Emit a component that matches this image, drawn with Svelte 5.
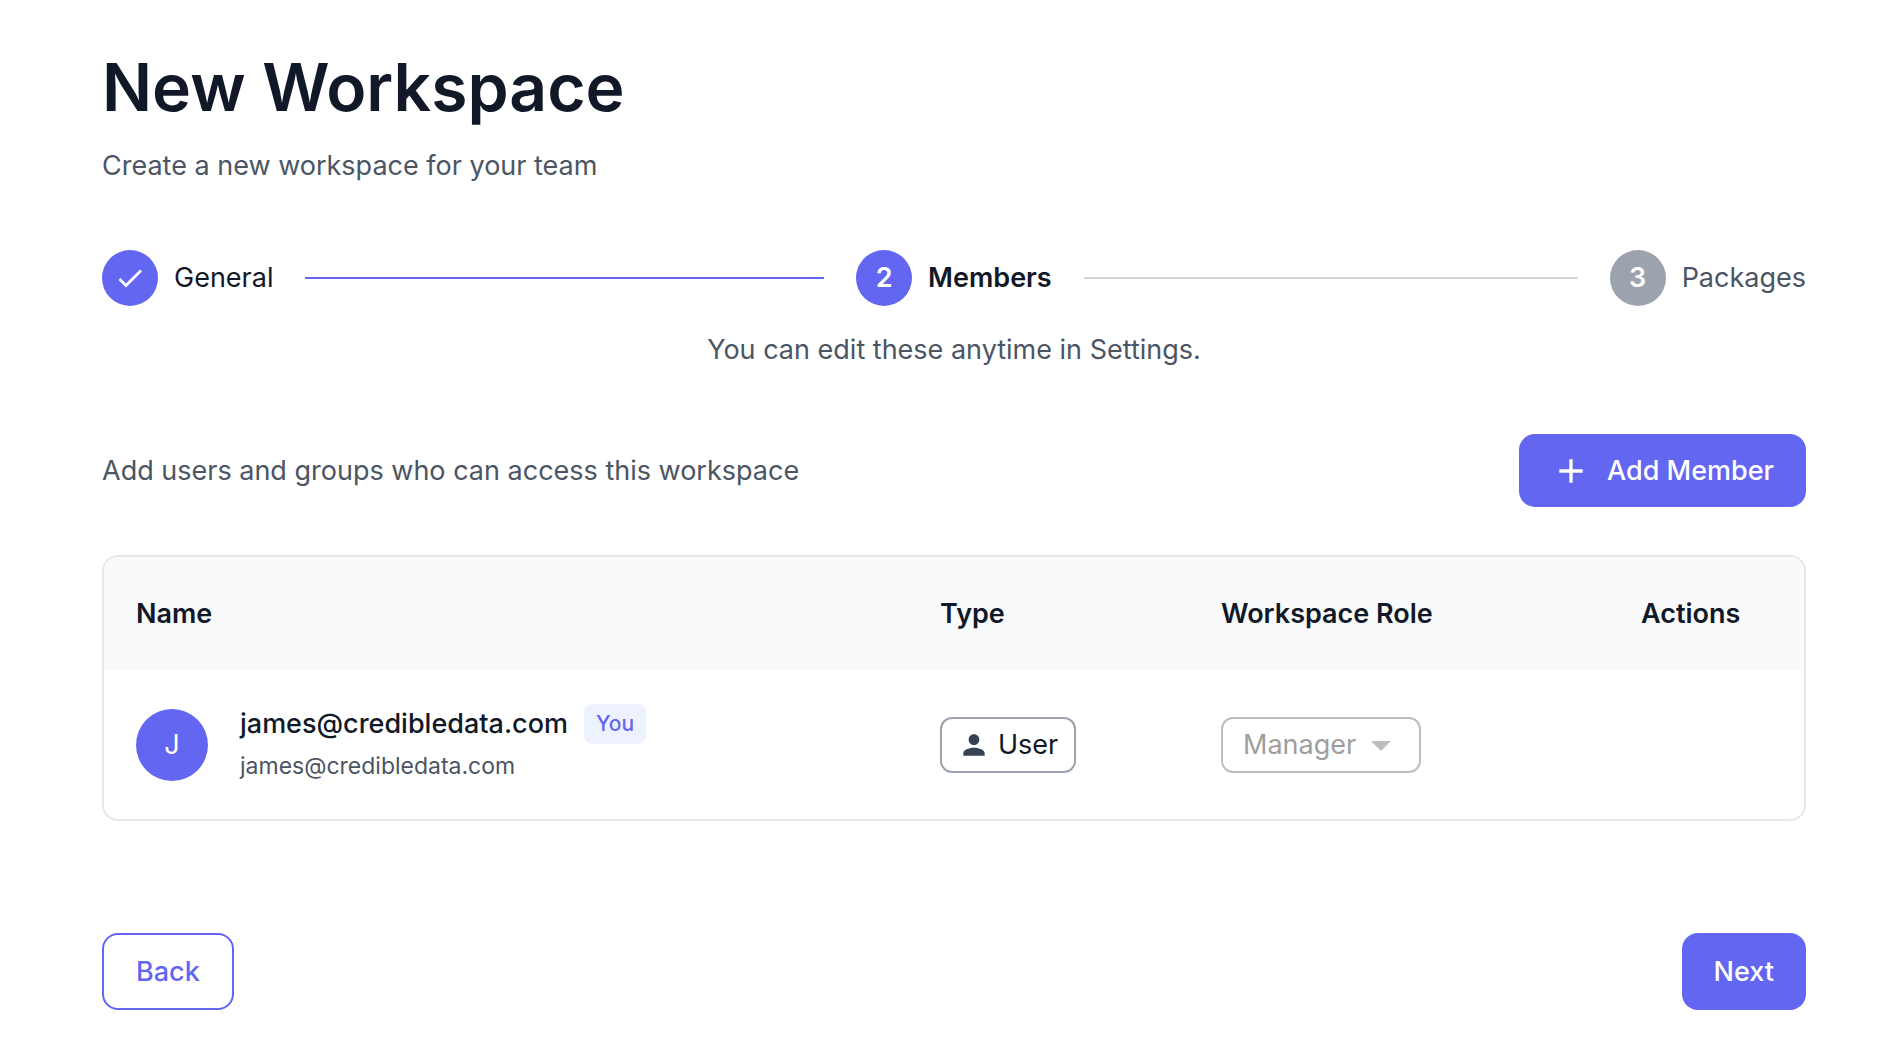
<script>
  let steps = [
    { label: "General", state: "done" },
    { label: "Members", state: "active" },
    { label: "Packages", state: "pending" },
  ];

  let roles = ["Manager"];

  let members = [
    {
      name: "james@credibledata.com",
      email: "james@credibledata.com",
      type: "User",
      role: "Manager",
      you: true,
    },
  ];
</script>

<main class="page">
  <header>
    <h1 class="title">New Workspace</h1>
    <p class="text">Create a new workspace for your team</p>
  </header>

  <ol class="stepper">
    {#each steps as step, i}
      {#if i > 0}
        <li class="connector connector-{steps[i - 1].state}" aria-hidden="true"></li>
      {/if}
      <li class="step step-{step.state}" aria-current={step.state === "active" ? "step" : undefined}>
        <span class="circle">
          {#if step.state === "done"}
            <svg width="32" height="32" viewBox="0 0 32 32" aria-hidden="true">
              <path d="M5.5 17 12 23.5 27 8.5" fill="none" stroke="currentColor" stroke-width="2.7" />
            </svg>
          {:else}
            {i + 1}
          {/if}
        </span>
        <span class="step-label">{step.label}</span>
      </li>
    {/each}
  </ol>

  <p class="text hint">You can edit these anytime in Settings.</p>

  <div class="toolbar">
    <p class="text">Add users and groups who can access this workspace</p>
    <button class="button button-primary button-add" type="button">
      <svg width="40" height="40" viewBox="0 0 24 24" fill="currentColor" aria-hidden="true">
        <path d="M19 13h-6v6h-2v-6H5v-2h6V5h2v6h6z" />
      </svg>
      Add Member
    </button>
  </div>

  <div class="card">
    <table class="members">
      <thead>
        <tr>
          <th>Name</th>
          <th class="col-type">Type</th>
          <th class="col-role">Workspace Role</th>
          <th class="col-actions">Actions</th>
        </tr>
      </thead>
      <tbody>
        {#each members as member}
          <tr>
            <td>
              <div class="member">
                <span class="avatar">{member.name[0].toUpperCase()}</span>
                <div>
                  <div class="member-name">
                    {member.name}
                    {#if member.you}
                      <span class="badge">You</span>
                    {/if}
                  </div>
                  <div class="member-email">{member.email}</div>
                </div>
              </div>
            </td>
            <td>
              <span class="chip">
                <svg width="32" height="32" viewBox="0 0 24 24" fill="currentColor" aria-hidden="true">
                  <path
                    d="M12 12c2.21 0 4-1.79 4-4s-1.79-4-4-4-4 1.79-4 4 1.79 4 4 4m0 2c-2.67 0-8 1.34-8 4v2h16v-2c0-2.66-5.33-4-8-4"
                  />
                </svg>
                {member.type}
              </span>
            </td>
            <td>
              <div class="role">
                <select disabled aria-label="Workspace role" bind:value={member.role}>
                  {#each roles as role}
                    <option value={role}>{role}</option>
                  {/each}
                </select>
                <svg width="48" height="48" viewBox="0 0 24 24" fill="currentColor" aria-hidden="true">
                  <path d="m7 10 5 5 5-5z" />
                </svg>
              </div>
            </td>
            <td></td>
          </tr>
        {/each}
      </tbody>
    </table>
  </div>

  <footer class="footer">
    <button class="button button-outlined" type="button">Back</button>
    <button class="button button-primary" type="button">Next</button>
  </footer>
</main>

<style>
  :global(body) {
    background-color: #ffffff;
  }

  .page {
    --primary: #6366f1;
    --dark: #111827;
    --muted: #4b5563;
    padding: 48px 80px 40px 102px;
    color: var(--dark);
    font-family: Inter, sans-serif;
    font-size: 27px;
    line-height: 40px;
  }

  .title {
    margin: 0 0 20px;
    font-size: 66px;
    font-weight: 600;
    line-height: 78px;
  }

  .text {
    margin: 0;
    color: var(--muted);
  }

  .stepper {
    display: flex;
    align-items: center;
    gap: 32px;
    margin: 64px 0 24px;
    padding: 0;
    list-style: none;
  }

  .step {
    display: flex;
    align-items: center;
    gap: 16px;
  }

  .circle {
    display: flex;
    align-items: center;
    justify-content: center;
    width: 56px;
    height: 56px;
    border-radius: 50%;
    background-color: var(--primary);
    color: #ffffff;
    font-weight: 600;
  }

  .step-active .step-label {
    font-weight: 600;
  }

  .step-pending {
    color: var(--muted);
  }

  .step-pending .circle {
    background-color: #9ca3af;
  }

  .connector {
    flex: 20 1 0;
    height: 2px;
    background-color: #d1d5db;
  }

  .connector-done {
    flex-grow: 21;
    background-color: var(--primary);
  }

  .hint {
    text-align: center;
  }

  .toolbar {
    display: flex;
    align-items: center;
    justify-content: space-between;
    margin: 64px 0 48px;
  }

  .button {
    display: flex;
    align-items: center;
    height: 77px;
    padding: 0 32px;
    border: 0;
    border-radius: 16px;
    font: inherit;
    font-weight: 500;
    cursor: pointer;
  }

  .button-primary {
    background-color: var(--primary);
    color: #ffffff;
  }

  .button-outlined {
    border: 2px solid var(--primary);
    background-color: transparent;
    color: var(--primary);
  }

  .button-add {
    gap: 16px;
    height: 73px;
  }

  .card {
    overflow: hidden;
    border: 2px solid #e5e7eb;
    border-radius: 16px;
  }

  .members {
    width: 100%;
    border-collapse: collapse;
    table-layout: fixed;
  }

  .members th {
    height: 113px;
    padding: 0 32px;
    background-color: #f9fafb;
    font-weight: 600;
    text-align: left;
  }

  .members td {
    height: 149px;
    padding: 0 32px;
  }

  .col-type {
    width: 217px;
  }

  .col-role {
    width: 356px;
  }

  .col-actions {
    width: 131px;
  }

  .member {
    display: flex;
    align-items: center;
    gap: 32px;
  }

  .avatar {
    display: flex;
    align-items: center;
    justify-content: center;
    width: 72px;
    height: 72px;
    border-radius: 50%;
    background-color: var(--primary);
    color: #ffffff;
  }

  .member-name {
    display: flex;
    align-items: center;
    gap: 16px;
    font-weight: 500;
  }

  .badge {
    padding: 0 12px;
    border-radius: 8px;
    background-color: #eef2ff;
    color: var(--primary);
    font-size: 21px;
  }

  .member-email {
    margin-top: 2px;
    color: var(--muted);
    font-size: 23px;
  }

  .chip {
    display: inline-flex;
    align-items: center;
    gap: 8px;
    height: 52px;
    padding: 0 16px;
    border: 2px solid #9ca3af;
    border-radius: 12px;
    vertical-align: middle;
  }

  .chip svg {
    color: #374151;
  }

  .role {
    display: inline-flex;
    align-items: center;
    height: 52px;
    padding: 0 14px 0 20px;
    border: 2px solid #bdbdbd;
    border-radius: 12px;
    color: #bdbdbd;
    vertical-align: middle;
  }

  .role select {
    padding: 0;
    border: 0;
    appearance: none;
    background: none;
    color: #9e9e9e;
    font: inherit;
    opacity: 1;
  }

  .footer {
    display: flex;
    justify-content: space-between;
    margin-top: 112px;
  }
</style>
